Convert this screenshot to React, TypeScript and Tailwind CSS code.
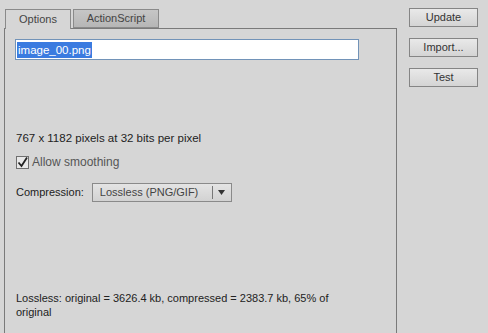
const font = { fontFamily: '"Liberation Sans", Arial, sans-serif' };

function Button({ label }: { label: string }) {
  return (
    <button className="w-[69px] h-[19px] border border-[#858585] bg-gradient-to-b from-[#e9e9e9] to-[#d4d4d4] text-[11px] text-[#333] leading-none flex items-center justify-center">
      {label}
    </button>
  );
}

export default function App() {
  return (
    <div
      className="w-[488px] h-[333px] bg-[#d6d6d6] flex overflow-hidden text-[#222]"
      style={font}
    >
      <div className="flex flex-col w-[393px] ml-[4px] pt-[9px]">
        <div className="flex items-end gap-[2px] ml-[1px] relative z-10">
          <div className="w-[66px] h-[20px] border border-b-0 border-[#8a8a8a] bg-[#d6d6d6] text-[11px] text-[#444] flex items-center justify-center">
            Options
          </div>
          <div className="w-[86px] h-[19px] mb-[1px] border border-[#8a8a8a] bg-gradient-to-b from-[#c6c6c6] to-[#b6b6b6] text-[11px] text-[#444] flex items-center justify-center">
            ActionScript
          </div>
        </div>
        <div className="flex-1 -mt-px border border-b-0 border-[#7a7a7a] flex flex-col px-[10px] pt-[10px]">
          <div className="w-[344px] h-[21px] border border-[#7293b8] bg-white flex items-center px-[1px]">
            <span className="bg-[#3a7be0] text-white text-[11.5px] leading-[16px] px-[1px]">
              image_00.png
            </span>
          </div>
          <div className="mt-[71px] text-[11.5px] leading-[14px] ml-[1px]">
            767 x 1182 pixels at 32 bits per pixel
          </div>
          <div className="mt-[8px] flex items-center gap-[3px] ml-[1px]">
            <div className="w-[13px] h-[13px] border border-[#6f6f6f] bg-[#e8e8e8] flex items-center justify-center">
              <svg width="11" height="11" viewBox="0 0 11 11">
                <path d="M1.5 5.5 L4.5 9 L10 0.5" fill="none" stroke="#222" strokeWidth="1.8" />
              </svg>
            </div>
            <span className="text-[12px] text-[#555]">Allow smoothing</span>
          </div>
          <div className="mt-[12px] flex items-center gap-[8px] ml-[1px]">
            <span className="text-[11px]">Compression:</span>
            <div className="w-[140px] h-[19px] border border-[#8a8a8a] bg-gradient-to-b from-[#e4e4e4] to-[#d2d2d2] flex items-center">
              <span className="flex-1 pl-[7px] text-[11px] text-[#444]">Lossless (PNG/GIF)</span>
              <span className="w-px h-[13px] bg-[#777]" />
              <span className="w-[18px] flex justify-center">
                <svg width="7" height="5" viewBox="0 0 7 5">
                  <path d="M0 0 H7 L3.5 5 Z" fill="#333" />
                </svg>
              </span>
            </div>
          </div>
          <div className="mt-[89px] text-[11px] leading-[14px] ml-[1px] w-[340px]">
            Lossless: original = 3626.4 kb, compressed = 2383.7 kb, 65% of original
          </div>
        </div>
      </div>
      <div className="flex flex-col gap-[11px] ml-[12px] pt-[8px]">
        <Button label="Update" />
        <Button label="Import..." />
        <Button label="Test" />
      </div>
    </div>
  );
}
